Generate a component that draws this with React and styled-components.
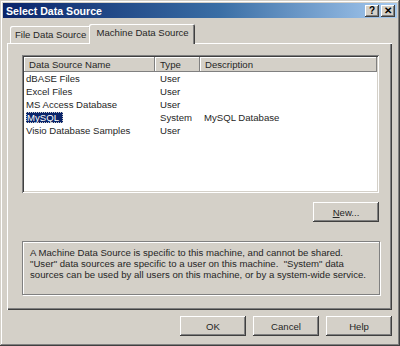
import React from "react";
import styled, { createGlobalStyle } from "styled-components";

const GlobalStyle = createGlobalStyle`
  html, body {
    margin: 0;
    padding: 0;
    background: #d4d0c8;
  }
  * {
    box-sizing: border-box;
  }
`;

const raised = `
  box-shadow: inset -1px -1px #404040, inset 1px 1px #ffffff,
    inset -2px -2px #808080, inset 2px 2px #d4d0c8;
`;

const Window = styled.div`
  width: 400px;
  height: 346px;
  padding: 3px;
  display: flex;
  flex-direction: column;
  background: #d4d0c8;
  box-shadow: inset -1px -1px #404040, inset 1px 1px #d4d0c8,
    inset -2px -2px #808080, inset 2px 2px #ffffff;
  font-family: "Liberation Sans", Arial, sans-serif;
  font-size: 9.6px;
  color: #262626;
`;

const TitleBar = styled.div`
  height: 15px;
  display: flex;
  align-items: center;
  padding: 0 2px 0 2px;
  background: linear-gradient(90deg, #0a246a 0%, #3a6ea5 55%, #a6caf0 100%);
`;

const Title = styled.div`
  flex: 1;
  color: #ffffff;
  font-weight: bold;
  font-size: 10.6px;
  padding-left: 1px;
`;

const CaptionButton = styled.div`
  width: 14px;
  height: 12px;
  margin-left: ${(p) => p.$gap || 0}px;
  display: flex;
  align-items: center;
  justify-content: center;
  background: #d4d0c8;
  ${raised}
  color: #000;
  font-weight: bold;
  font-size: 10px;
  line-height: 1;
`;

const Content = styled.div`
  flex: 1;
  display: flex;
  flex-direction: column;
  padding: 4px 5px 0 4px;
`;

const TabStrip = styled.div`
  height: 21px;
  display: flex;
  align-items: flex-end;
  padding-left: 3px;
  position: relative;
  z-index: 1;
`;

const Tab = styled.div`
  height: ${(p) => (p.$active ? 20 : 17)}px;
  margin: 0 ${(p) => (p.$active ? -2 : 0)}px
    ${(p) => (p.$active ? -1 : 0)}px;
  padding: ${(p) => (p.$active ? "3px 6px 0 7px" : "3px 5px 0 5px")};
  background: #d4d0c8;
  border-radius: 2px 2px 0 0;
  box-shadow: inset 1px 1px #ffffff, inset -1px 0 #404040,
    inset -2px 0 #808080;
  white-space: nowrap;
`;

const Panel = styled.div`
  height: 267px;
  display: flex;
  flex-direction: column;
  padding: 12px 13px 0 15px;
  box-shadow: inset 1px 1px #ffffff, inset -1px -1px #404040,
    inset -2px -2px #808080;
`;

const ListView = styled.div`
  height: 138px;
  background: #ffffff;
  box-shadow: inset 1px 1px #808080, inset -1px -1px #ffffff,
    inset 2px 2px #404040, inset -2px -2px #d4d0c8;
  padding: 2px;
`;

const HeaderRow = styled.div`
  display: grid;
  grid-template-columns: 131px 45px 1fr;
  height: 15px;
`;

const HeaderCell = styled.div`
  background: #d4d0c8;
  padding: 2px 0 0 5px;
  box-shadow: inset -1px -1px #808080, inset 1px 1px #ffffff;
  white-space: nowrap;
  overflow: hidden;
`;

const Row = styled.div`
  display: grid;
  grid-template-columns: 131px 45px 1fr;
  height: 13px;
  align-items: center;
  &:first-of-type {
    margin-top: 1px;
  }
`;

const Cell = styled.div`
  padding-left: ${(p) => p.$pad || 2}px;
  white-space: nowrap;
`;

const Selected = styled.span`
  display: inline-block;
  padding: 0 4px 0 1px;
  line-height: 11px;
  background: #0a246a;
  color: #ffffff;
  outline: 1px dotted #c8c8c8;
  outline-offset: -1px;
`;

const ButtonRow = styled.div`
  display: flex;
  justify-content: flex-end;
  gap: 7px;
  margin-top: ${(p) => p.$top || 0}px;
`;

const PushButton = styled.div`
  width: 66px;
  height: 20px;
  display: flex;
  align-items: center;
  justify-content: center;
  background: #d4d0c8;
  ${raised}
`;

const GroupBox = styled.div`
  height: 54px;
  margin-top: 19px;
  margin-right: -1px;
  padding: 5px 6px 0 7px;
  border: 1px solid #808080;
  box-shadow: inset 1px 1px #ffffff, 1px 1px #ffffff;
  line-height: 11px;
  white-space: nowrap;
`;

const rows = [
  { name: "dBASE Files", type: "User", desc: "" },
  { name: "Excel Files", type: "User", desc: "" },
  { name: "MS Access Database", type: "User", desc: "" },
  { name: "MySQL", type: "System", desc: "MySQL Database", selected: true },
  { name: "Visio Database Samples", type: "User", desc: "" },
];

export default function App() {
  return (
    <>
      <GlobalStyle />
      <Window>
        <TitleBar>
          <Title>Select Data Source</Title>
          <CaptionButton>?</CaptionButton>
          <CaptionButton $gap={2}>✕</CaptionButton>
        </TitleBar>
        <Content>
          <TabStrip>
            <Tab>File Data Source</Tab>
            <Tab $active>Machine Data Source</Tab>
          </TabStrip>
          <Panel>
            <ListView>
              <HeaderRow>
                <HeaderCell>Data Source Name</HeaderCell>
                <HeaderCell>Type</HeaderCell>
                <HeaderCell>Description</HeaderCell>
              </HeaderRow>
              {rows.map((r) => (
                <Row key={r.name}>
                  <Cell>
                    {r.selected ? <Selected>{r.name}</Selected> : r.name}
                  </Cell>
                  <Cell $pad={5}>{r.type}</Cell>
                  <Cell $pad={4}>{r.desc}</Cell>
                </Row>
              ))}
            </ListView>
            <ButtonRow $top={9}>
              <PushButton>
                <span>
                  <u>N</u>ew...
                </span>
              </PushButton>
            </ButtonRow>
            <GroupBox>
              A Machine Data Source is specific to this machine, and cannot be
              shared.
              <br />
              "User" data sources are specific to a user on this machine.
              &nbsp;"System" data
              <br />
              sources can be used by all users on this machine, or by a
              system-wide service.
            </GroupBox>
          </Panel>
          <ButtonRow $top={6}>
            <PushButton>OK</PushButton>
            <PushButton>Cancel</PushButton>
            <PushButton>Help</PushButton>
          </ButtonRow>
        </Content>
      </Window>
    </>
  );
}
